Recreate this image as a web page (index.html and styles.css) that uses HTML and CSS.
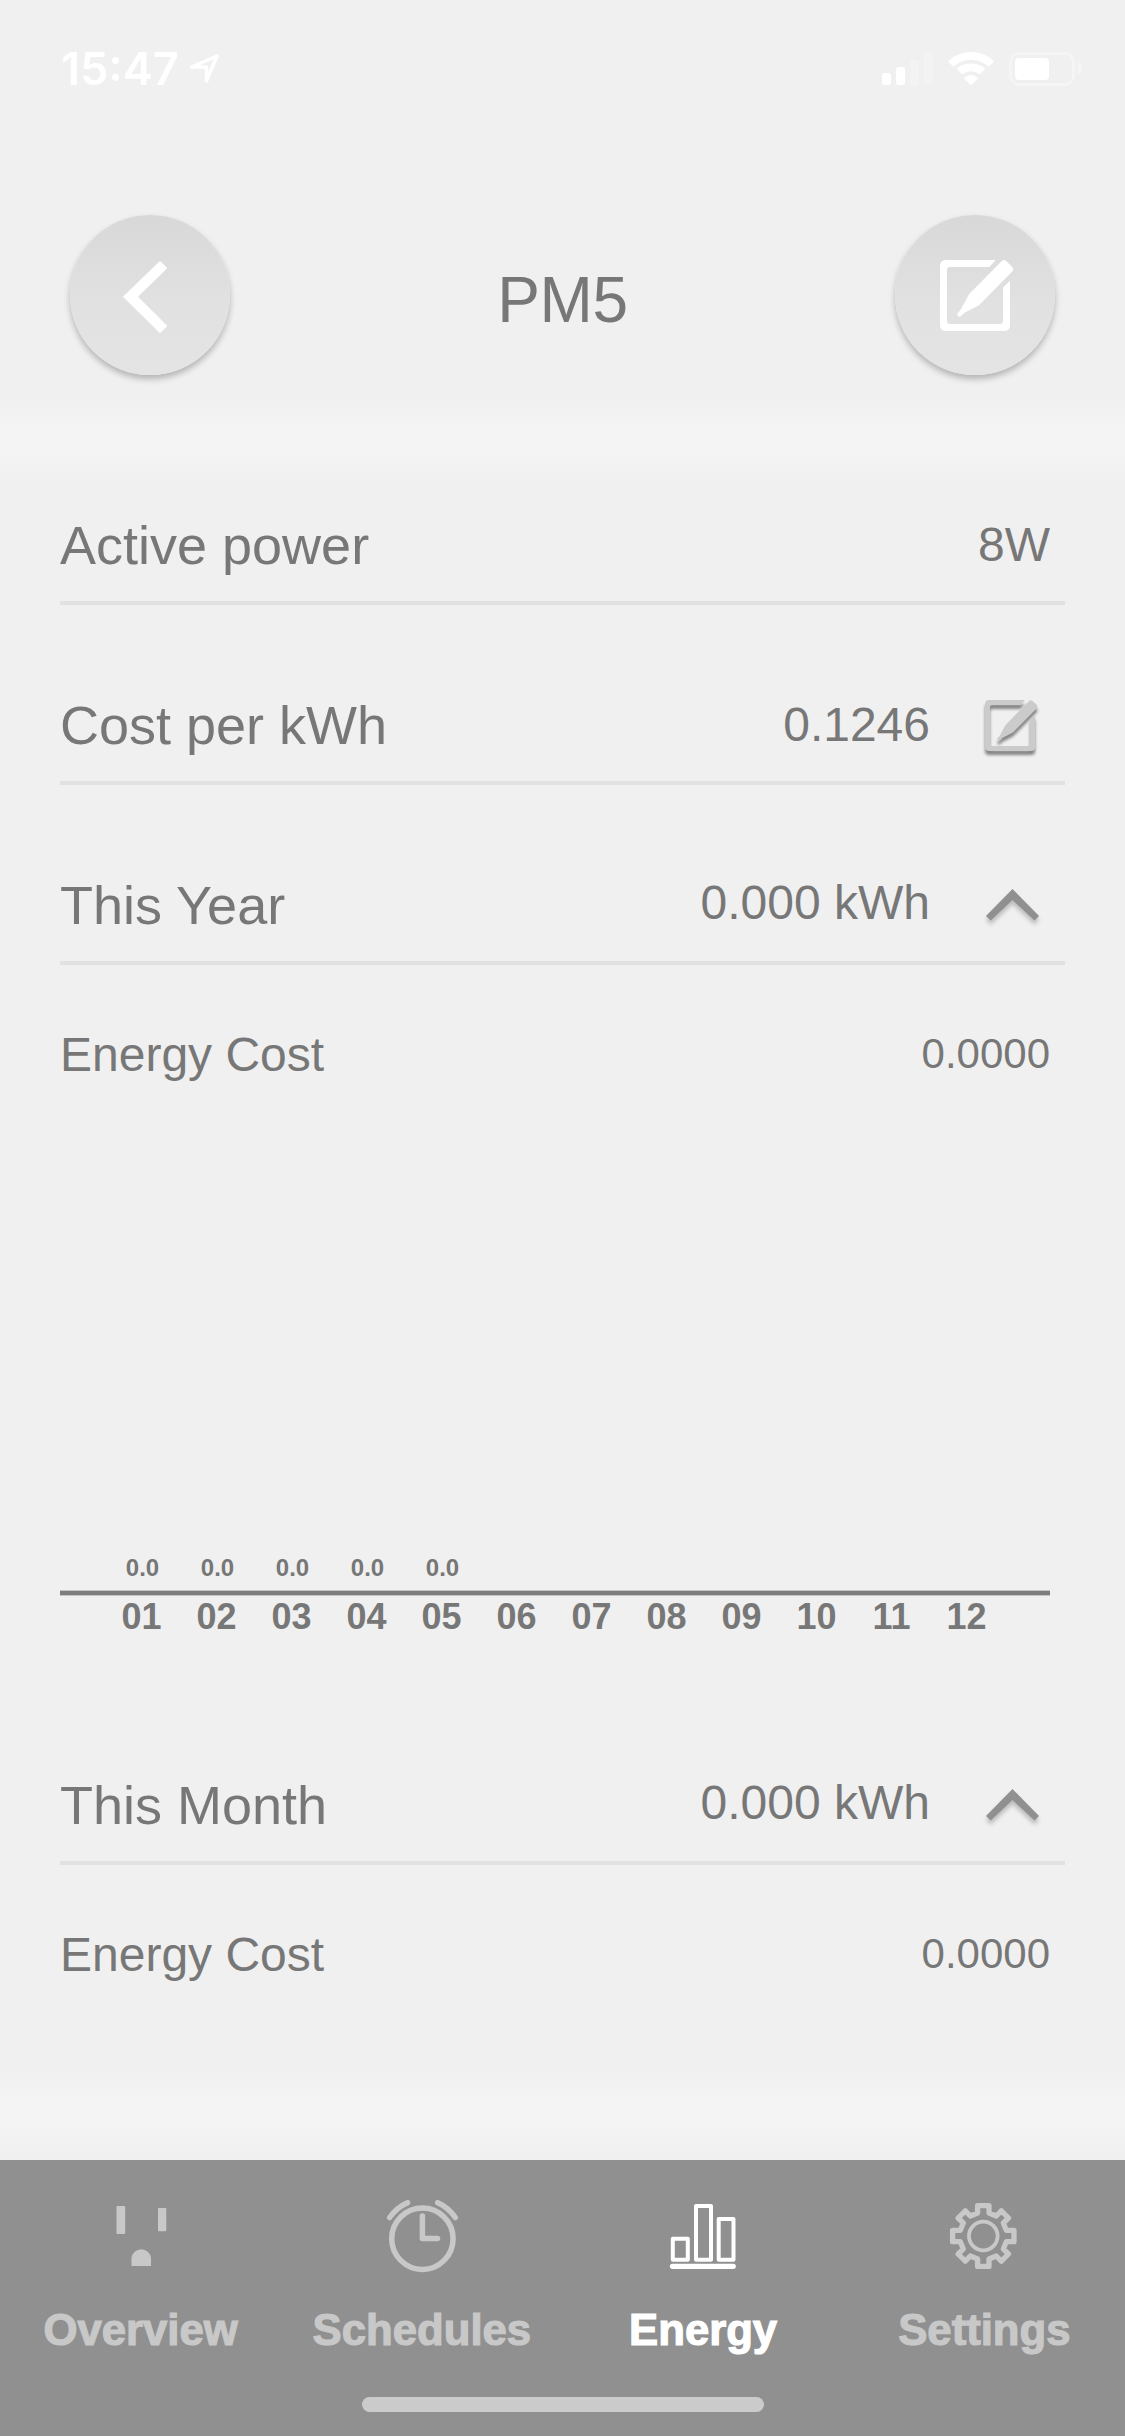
FILE: index.html
```html
<!DOCTYPE html>
<html lang="en">
<head>
<meta charset="utf-8">
<title>PM5 Energy</title>
<link rel="stylesheet" href="styles.css">
</head>
<body>
<svg class="defs" width="0" height="0" aria-hidden="true">
  <symbol id="edit" viewBox="0 0 74 71">
    <path d="M55.7 0H6Q0 0 0 6V65Q0 71 6 71H64Q70 71 70 65V20.7L63 27.5V61Q63 64 60 64H10Q7 64 7 61V10Q7 7 10 7H49.3Z"/>
    <path d="M61.5 1.2Q64 -1 66.500 1.200L72 6.700Q74.200 9.200 72 11.700L39 45.300L24 53L20.500 56.500Q17 57.500 17.300 53.500L20.700 49.700L29 34.300Z"/>
  </symbol>
  <symbol id="up" viewBox="0 0 54 33"><path d="M26.500 0L53 27L48.500 31.500L26.500 11L4.700 31.500L0 27Z"/></symbol>
</svg>
<div class="screen">
  <div class="status">
    <span class="time">15:47</span>
    <svg class="location" width="34" height="34" viewBox="0 0 34 34"><path d="M4.500 16L30 5L19.500 30V16Z" fill="none" stroke="#fff" stroke-width="3.500" stroke-linejoin="round"/></svg>
    <svg class="indicators" width="202" height="36" viewBox="0 0 202 36">
      <g fill="#fff">
        <rect x="1" y="22" width="9" height="12" rx="2.500"/><rect x="15" y="16" width="9" height="18" rx="2.500"/>
        <g opacity=".25"><rect x="29" y="9" width="9" height="25" rx="2.500"/><rect x="43" y="2" width="9" height="32" rx="2.500"/></g>
        <path d="M68 9.500C80-2 100-2 112 9.500Q113 10.500 112 11.500L108.500 15Q107.500 15.700 106.500 15C97 6.500 83 6.500 73.500 15Q72.500 15.700 71.500 15L68 11.500Q67 10.500 68 9.500Z"/>
        <path d="M75.600 17.500C83.500 10.800 96.500 10.800 104.400 17.500L99.500 22.700Q98.500 23.500 97.500 22.700C93 19.300 87 19.300 82.500 22.700Q81.500 23.500 80.500 22.700Z"/>
        <path d="M83.300 26.500Q90 21.500 96.700 26.500Q97.300 27 96.700 27.700L90.800 33.500Q90 34.300 89.200 33.500L83.300 27.700Q82.700 27 83.300 26.500Z"/>
      </g>
      <rect x="129.500" y="2.500" width="63" height="31" rx="9" fill="none" stroke="#f5f5f5" stroke-width="3"/>
      <path d="M197 11.500Q201 13 201 17.500T197 23.500Z" fill="#f5f5f5"/>
      <rect x="134" y="7" width="34" height="22" rx="4" fill="#fff"/>
    </svg>
  </div>
  <header class="header">
    <button class="round" aria-label="Back"><svg width="44" height="72" viewBox="0 0 44 72"><path d="M0 35.700L36 .7Q37 0 38 .7L43.500 6.300Q44.500 7 43.500 8L15 35.700L43.500 64Q44.500 65 43.500 66L38 71.300Q37 72 36 71.300Z" fill="#fff"/></svg></button>
    <h1 class="title">PM5</h1>
    <button class="round" aria-label="Edit"><svg class="edit-large" width="74" height="71"><use href="#edit"/></svg></button>
  </header>
  <main class="content">
    <div class="row"><span class="label">Active power</span><span class="value last">8W</span></div>
    <div class="row"><span class="label">Cost per kWh</span><span class="value">0.1246</span><svg class="action edit-small" width="53" height="51"><use href="#edit"/></svg></div>
    <div class="row"><span class="label">This Year</span><span class="value raised">0.000 kWh</span><svg class="action caret" width="54" height="33"><use href="#up"/></svg></div>
    <div class="cost"><span class="cost-label">Energy Cost</span><span class="cost-value">0.0000</span></div>
    <div class="chart">
      <div class="bars"><span>0.0</span><span>0.0</span><span>0.0</span><span>0.0</span><span>0.0</span></div>
      <div class="axis"></div>
      <div class="months"><span>01</span><span>02</span><span>03</span><span>04</span><span>05</span><span>06</span><span>07</span><span>08</span><span>09</span><span>10</span><span>11</span><span>12</span></div>
    </div>
    <div class="row"><span class="label">This Month</span><span class="value raised">0.000 kWh</span><svg class="action caret" width="54" height="33"><use href="#up"/></svg></div>
    <div class="cost"><span class="cost-label">Energy Cost</span><span class="cost-value">0.0000</span></div>
  </main>
  <nav class="tabs">
    <a class="tab"><svg width="80" height="80" viewBox="-40 -40 80 80" fill="currentColor"><rect x="-24.500" y="-34" width="8.700" height="28" rx="1"/><rect x="17" y="-32" width="8.300" height="23.300" rx="1"/><path d="M-9.500 26V18A9.800 9.800 0 0 1 10 18V26Z"/></svg><span>Overview</span></a>
    <a class="tab"><svg width="80" height="80" viewBox="-40 -40 80 80" fill="none" stroke="currentColor" stroke-width="5.500" stroke-linecap="round" stroke-linejoin="round"><circle cx=".4" cy="-1.300" r="30.700"/><path d="M.4 -24V-1.500H15.500M-32.300 -22.500Q-25.500 -32.500 -14.500 -37.300M15.700 -37.300Q26.500 -32.500 33.300 -22.500"/></svg><span>Schedules</span></a>
    <a class="tab active"><svg width="80" height="80" viewBox="-40 -40 80 80" fill="none" stroke="currentColor" stroke-width="4" stroke-linejoin="round"><path d="M-30.200 -1.300H-15.200V19.700H-30.200ZM-7 -34H8V19.700H-7ZM15.700 -21H30.500V19.700H15.700Z"/><path d="M-30.500 26.300H30.200" stroke-width="5.300" stroke-linecap="round"/></svg><span>Energy</span></a>
    <a class="tab"><svg width="80" height="80" viewBox="-39.300 -36 80 80" fill="none" stroke="currentColor" stroke-width="5.300" stroke-linejoin="round"><path d="M-5.700 -30.400H5.700V-23L13 -20L18 -25.200L25.200 -18L20 -13L23 -5.700H30.700V5.700H23L20 13L25.200 18L18 25.200L13 20L5.700 23V30.400H-5.700V23L-13 20L-18 25.200L-25.200 18L-20 13L-23 5.700H-30.700V-5.700H-23L-20 -13L-25.200 -18L-18 -25.200L-13 -20L-5.700 -23Z"/><circle r="14.300" stroke-width="3.800"/></svg><span>Settings</span></a>
    <div class="home"></div>
  </nav>
</div>
</body>
</html>
```
FILE: styles.css
```css
* { box-sizing: border-box; }
body {
  margin: 0;
  background: #f0f0f0;
  color: #777;
  font-family: "Liberation Sans", Arial, sans-serif;
}
svg { display: block; flex: none; }
.defs { position: absolute; }
.screen {
  display: flex;
  flex-direction: column;
  width: 1125px;
  height: 2436px;
}
.status {
  display: flex;
  align-items: flex-start;
  height: 215px;
  padding: 51px 42px 0 61px;
  color: #fff;
}
.time {
  width: 126px;
  font: 600 45px/36px Inter, sans-serif;
  white-space: nowrap;
}
.indicators { margin-left: auto; }
.header {
  display: flex;
  justify-content: space-between;
  align-items: flex-start;
  height: 173px;
  padding: 0 70px;
}
.round {
  display: flex;
  align-items: center;
  justify-content: center;
  width: 160px;
  height: 160px;
  padding: 3px 10px 0 0;
  border: 0;
  border-radius: 50%;
  background: linear-gradient(#d8d8d8, #e1e1e1 55%, #e4e4e4);
  box-shadow: 0 4px 6px rgba(0, 0, 0, .25);
}
.edit-large { margin: -2px 0 0 15px; fill: #fff; }
.title {
  margin: 0;
  padding-top: 45px;
  font-size: 64px;
  font-weight: 400;
  line-height: 80px;
  letter-spacing: -.3px;
}
.content {
  display: flex;
  flex-direction: column;
  height: 1772px;
  padding: 37px 60px 0;
  background:
    linear-gradient(#f0f0f0, #f4f4f4 42%, #f4f4f4 60%, #f0f0f0) 0 8px / 100% 88px no-repeat,
    linear-gradient(#f0f0f0, #f4f4f4 40%, #f4f4f4 60%, #f0f0f0) bottom / 100% 94px no-repeat;
}
.row {
  display: flex;
  align-items: flex-end;
  height: 180px;
  border-bottom: 4px solid #e1e1e1;
}
.label {
  flex: 1;
  padding-bottom: 26px;
  font-size: 54px;
  line-height: 60px;
}
.value {
  padding-bottom: 26px;
  font-size: 48px;
  line-height: 60px;
}
.value.raised { padding-bottom: 28px; }
.value.last { margin-right: 15px; }
.action { overflow: visible; }
.edit-small {
  margin: 0 27px 30px 55px;
  fill: #cbcbcb;
  filter: drop-shadow(0 4px 1.500px rgba(0, 0, 0, .45));
}
.caret {
  margin: 0 25px 39px 56px;
  fill: #909090;
  filter: drop-shadow(0 4px 2px rgba(0, 0, 0, .22));
}
.cost {
  display: flex;
  justify-content: space-between;
  padding: 59px 15px 0 0;
  height: 125px;
  line-height: 60px;
}
.cost-label { padding-top: 1px; font-size: 48px; }
.cost-value { font-size: 42px; }
.chart {
  display: flex;
  flex-direction: column;
  justify-content: flex-end;
  width: 990px;
  height: 595px;
  padding-bottom: 47px;
  font-weight: 700;
}
.bars, .months {
  display: grid;
  grid-template-columns: repeat(12, 75px);
  padding-left: 44px;
  text-align: center;
}
.bars { padding: 0 0 7px 45px; font-size: 24px; line-height: 30px; }
.axis {
  height: 6px;
  border: solid #c4c4c4;
  border-width: 1px 0;
  background: #7d7d7d;
}
.months { font-size: 36px; line-height: 42px; }
.tabs {
  position: relative;
  display: grid;
  grid-template-columns: repeat(4, 1fr);
  height: 276px;
  padding-top: 40px;
  background: #909090;
}
.tab {
  display: flex;
  flex-direction: column;
  align-items: center;
  color: #c8c8c8;
  font-size: 43.7px;
  font-weight: 700;
  line-height: 50px;
  -webkit-text-stroke: 1.2px currentColor;
}
.tab svg { margin-bottom: 25px; overflow: visible; }
.tab.active { color: #fff; }
.home {
  position: absolute;
  left: 362px;
  bottom: 24px;
  width: 402px;
  height: 15px;
  border-radius: 8px;
  background: #cbcbcb;
}
```
